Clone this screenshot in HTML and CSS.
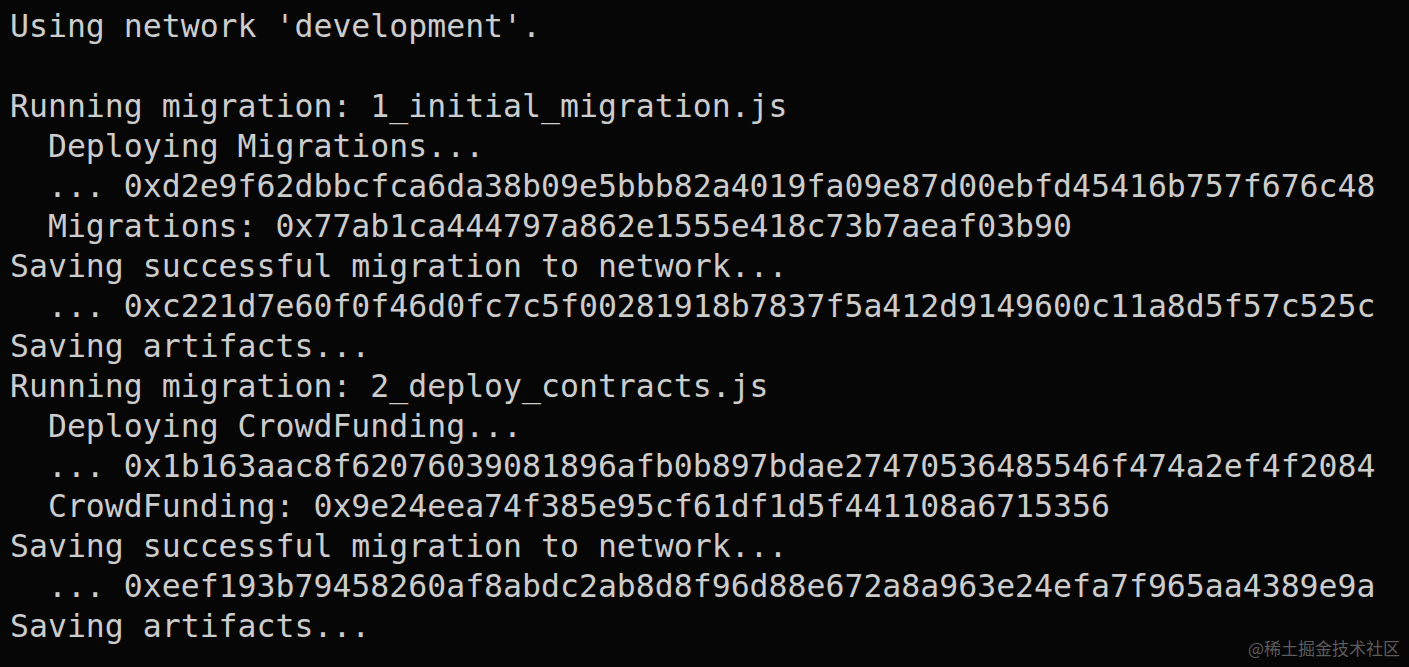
FILE: index.html
```html
<!DOCTYPE html>
<html lang="en">
<head>
<meta charset="utf-8">
<title>Terminal</title>
<link rel="stylesheet" href="styles.css">
</head>
<body>
<main class="terminal">
<div class="output">
<div class="line">Using network 'development'.</div>
<div class="line blank"> </div>
<div class="line">Running migration: 1_initial_migration.js</div>
<div class="line">  Deploying Migrations...</div>
<div class="line">  ... 0xd2e9f62dbbcfca6da38b09e5bbb82a4019fa09e87d00ebfd45416b757f676c48</div>
<div class="line">  Migrations: 0x77ab1ca444797a862e1555e418c73b7aeaf03b90</div>
<div class="line">Saving successful migration to network...</div>
<div class="line">  ... 0xc221d7e60f0f46d0fc7c5f00281918b7837f5a412d9149600c11a8d5f57c525c</div>
<div class="line">Saving artifacts...</div>
<div class="line">Running migration: 2_deploy_contracts.js</div>
<div class="line">  Deploying CrowdFunding...</div>
<div class="line">  ... 0x1b163aac8f62076039081896afb0b897bdae27470536485546f474a2ef4f2084</div>
<div class="line">  CrowdFunding: 0x9e24eea74f385e95cf61df1d5f441108a6715356</div>
<div class="line">Saving successful migration to network...</div>
<div class="line">  ... 0xeef193b79458260af8abdc2ab8d8f96d88e672a8a963e24efa7f965aa4389e9a</div>
<div class="line">Saving artifacts...</div>
</div>
<div class="watermark">@稀土掘金技术社区</div>
</main>
</body>
</html>
```
FILE: styles.css
```css
html, body {
  margin: 0;
  padding: 0;
  background: #060606;
  height: 100%;
  overflow: hidden;
}
.terminal {
  position: relative;
  height: 667px;
  padding: 6px 0 0 10px;
  box-sizing: border-box;
}
.output {
  display: flex;
  flex-direction: column;
  align-items: flex-start;
  font-family: "DejaVu Sans Mono", "Liberation Mono", monospace;
  font-size: 31.5px;
  line-height: 40px;
  color: #cccccc;
}
.line {
  white-space: pre;
  height: 40px;
}
.watermark {
  position: absolute;
  right: 9px;
  bottom: 8px;
  font-family: "Noto Sans CJK SC", "Noto Sans", sans-serif;
  font-size: 17px;
  line-height: 22px;
  color: #5c5c5c;
}
```
